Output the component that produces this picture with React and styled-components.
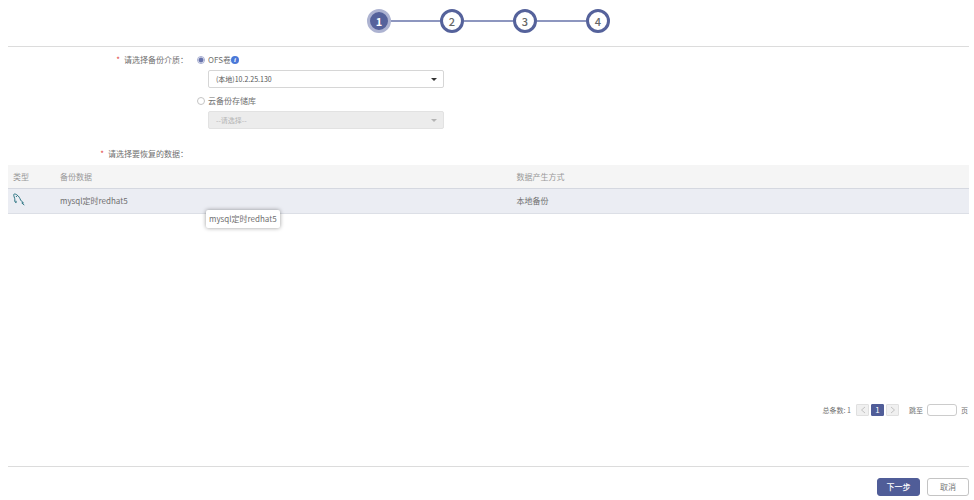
import React, { useState } from 'react';
import styled, { createGlobalStyle } from 'styled-components';

const GlobalStyle = createGlobalStyle`
  * {
    box-sizing: border-box;
  }
  body {
    margin: 0;
    background: #fff;
    color: #707070;
    font-family: "Noto Sans CJK SC", "Noto Sans", sans-serif;
    font-size: 8px;
    line-height: 12px;
  }
  button, input, select {
    font: inherit;
    color: inherit;
    margin: 0;
  }
`;

const Page = styled.div`
  display: flex;
  flex-direction: column;
  min-height: 100vh;
  padding: 0 5px 0 8px;
`;

const Steps = styled.ol`
  display: flex;
  align-items: center;
  justify-content: center;
  margin: 0;
  padding: 9px 0 13px;
  list-style: none;
  border-bottom: 1px solid #dcdcdc;
`;

const Step = styled.li`
  display: flex;
  align-items: center;

  & + &::before {
    content: '';
    width: 49px;
    height: 2px;
    background: #8d96bf;
  }
`;

const StepCircle = styled.span`
  display: flex;
  align-items: center;
  justify-content: center;
  width: 24px;
  height: 24px;
  border: 3px solid ${({ $active }) => ($active ? '#adb3d1' : '#55629b')};
  border-radius: 50%;
  background: ${({ $active }) => ($active ? '#55629b' : '#fff')};
  color: ${({ $active }) => ($active ? '#fff' : '#666')};
  font-size: 11px;
  font-weight: ${({ $active }) => ($active ? 700 : 500)};
`;

const Form = styled.form`
  display: flex;
  flex-direction: column;
  flex: 1;
`;

const Field = styled.div`
  display: flex;
  gap: 9px;
  padding-top: 6px;
`;

const FieldLabel = styled.span`
  width: 180px;
  line-height: 13px;
  text-align: right;
`;

const Required = styled.span`
  margin-right: 4px;
  color: #e0413c;
`;

const Options = styled.div`
  display: flex;
  flex-direction: column;
`;

const Option = styled.label`
  display: flex;
  align-items: center;
  height: 13px;
`;

const Radio = styled.input`
  appearance: none;
  flex: none;
  width: 8px;
  height: 8px;
  margin-right: 3px;
  border: 1px solid #c4c4c4;
  border-radius: 50%;
  background: #fff;

  &:checked {
    border-color: #a3abd0;
    background: radial-gradient(circle, #6672ab 2px, #fff 3px);
  }
`;

const InfoBadge = styled.span`
  display: flex;
  align-items: center;
  justify-content: center;
  width: 8px;
  height: 8px;
  border-radius: 50%;
  background: #4a78d8;
  color: #fff;
  font-family: "Liberation Serif", serif;
  font-size: 7px;
  font-style: italic;
  font-weight: 700;
  line-height: 8px;
`;

const SelectBox = styled.div`
  position: relative;
  width: 236px;
  margin: 4px 0 6px 11px;
  color: ${({ $disabled }) => ($disabled ? '#b4b4b4' : '#333')};

  &::after {
    content: '';
    position: absolute;
    top: 8px;
    right: 7px;
    border: 3px solid transparent;
    border-top-color: currentColor;
    border-bottom: 0;
    pointer-events: none;
  }
`;

const Select = styled.select`
  appearance: none;
  display: block;
  width: 100%;
  height: 18px;
  padding: 0 16px 0 7px;
  border: 1px solid #d6d6d6;
  border-radius: 2px;
  background: #fff;
  color: #555;
  font-size: 7px;

  &:disabled {
    border-color: #e2e2e2;
    background: #ececec;
    color: #b4b4b4;
    opacity: 1;
  }
`;

const DataHeading = styled(Field)`
  padding: 12px 0 5px;
`;

const TableArea = styled.div`
  position: relative;
`;

const Table = styled.table`
  width: 100%;
  table-layout: fixed;
  border-collapse: separate;
  border-spacing: 0;
  text-align: left;
`;

const HeadCell = styled.th`
  width: ${({ $width }) => $width || 'auto'};
  height: 24px;
  padding: 0 5px;
  border-bottom: 1px solid #d5d8e0;
  background: #f5f5f5;
  color: #999;
  font-weight: 400;
`;

const Cell = styled.td`
  height: 25px;
  padding: 0 5px;
  border-bottom: 1px solid #dcdfe6;
  background: #ebedf3;
`;

const DolphinIcon = styled.svg`
  display: block;
  width: 12px;
  height: 13px;
  margin-bottom: 3px;
`;

const Tooltip = styled.div`
  position: absolute;
  top: 45px;
  left: 198px;
  padding: 3px;
  border-radius: 2px;
  background: #fff;
  box-shadow: 0 0 4px rgba(0, 0, 0, 0.4);
`;

const Pagination = styled.nav`
  display: flex;
  align-items: center;
  justify-content: flex-end;
  margin-top: auto;
  padding: 0 1px 50px;
  font-size: 7px;
`;

const Total = styled.span`
  margin-right: 5px;
`;

const Pages = styled.div`
  display: flex;
  gap: 2px;
  margin-right: 10px;
`;

const PageButton = styled.button`
  display: flex;
  align-items: center;
  justify-content: center;
  width: 13px;
  height: 12px;
  padding: 0;
  border: 1px solid ${({ $current }) => ($current ? '#505d98' : '#e0e0e0')};
  border-radius: 1px;
  background: ${({ $current }) => ($current ? '#505d98' : '#f0f0f0')};
  color: ${({ $current }) => ($current ? '#fff' : '#c3c3c3')};
  font-size: 8px;
`;

const Chevron = styled.svg`
  width: 6px;
  height: 8px;
  fill: none;
  stroke: currentColor;
`;

const Jump = styled.label`
  display: flex;
  align-items: center;
  gap: 4px;
`;

const JumpInput = styled.input`
  width: 30px;
  height: 12px;
  padding: 0 3px;
  border: 1px solid #ccc;
  border-radius: 3px;
  background: #fff;
`;

const Footer = styled.footer`
  display: flex;
  justify-content: flex-end;
  gap: 7px;
  padding: 11px 0 4px;
  border-top: 1px solid #dcdcdc;
`;

const Button = styled.button`
  width: ${({ $primary }) => ($primary ? '43px' : '42px')};
  height: 18px;
  padding: 0;
  border: 1px solid ${({ $primary }) => ($primary ? '#505d98' : '#c4c4c4')};
  border-radius: 3px;
  background: ${({ $primary }) => ($primary ? '#505d98' : '#fff')};
  color: ${({ $primary }) => ($primary ? '#fff' : '#777')};
  font-weight: ${({ $primary }) => ($primary ? 500 : 400)};
`;

const steps = [1, 2, 3, 4];
const rows = [{ name: 'mysql定时redhat5', source: '本地备份' }];

function StepBar({ current }) {
  return (
    <Steps>
      {steps.map((step) => (
        <Step key={step}>
          <StepCircle $active={step === current}>{step}</StepCircle>
        </Step>
      ))}
    </Steps>
  );
}

function MysqlIcon() {
  return (
    <DolphinIcon viewBox="0 0 12 13" fill="none" stroke="#2b7482" role="img" aria-label="MySQL">
      <path d="M3.2 9.6C2.2 10 1.6 8.4 1.8 6.8C2 5 .3 2.8 .8 1.4C1.6 .6 3 1.2 4 2C6 3.2 6.8 5.2 7.6 7C8.2 8.4 9.4 8.8 10.4 9.8" />
      <path d="M3.2 9.6L3 7.8M10.4 9.8L8.8 10C9.4 11 10.5 10.9 11.3 12" />
      <path d="M3 3L3.8 4" />
    </DolphinIcon>
  );
}

function BackupTable() {
  return (
    <TableArea>
      <Table>
        <thead>
          <tr>
            <HeadCell $width="47px">类型</HeadCell>
            <HeadCell $width="47.5%">备份数据</HeadCell>
            <HeadCell>数据产生方式</HeadCell>
          </tr>
        </thead>
        <tbody>
          {rows.map((row) => (
            <tr key={row.name}>
              <Cell><MysqlIcon /></Cell>
              <Cell>{row.name}</Cell>
              <Cell>{row.source}</Cell>
            </tr>
          ))}
        </tbody>
      </Table>
      <Tooltip role="tooltip">{rows[0].name}</Tooltip>
    </TableArea>
  );
}

function Pager() {
  return (
    <Pagination>
      <Total>总条数: 1</Total>
      <Pages>
        <PageButton type="button" aria-label="上一页">
          <Chevron viewBox="0 0 6 8"><path d="M5 1L1.5 4L5 7" /></Chevron>
        </PageButton>
        <PageButton type="button" $current>1</PageButton>
        <PageButton type="button" aria-label="下一页">
          <Chevron viewBox="0 0 6 8"><path d="M1 1L4.5 4L1 7" /></Chevron>
        </PageButton>
      </Pages>
      <Jump>
        跳至
        <JumpInput type="text" />
        页
      </Jump>
    </Pagination>
  );
}

function App() {
  const [medium, setMedium] = useState('ofs');

  return (
    <Page>
      <GlobalStyle />
      <StepBar current={1} />
      <Form onSubmit={(e) => e.preventDefault()}>
        <Field role="radiogroup" aria-labelledby="medium-label">
          <FieldLabel id="medium-label"><Required>*</Required>请选择备份介质：</FieldLabel>
          <Options>
            <Option>
              <Radio
                type="radio"
                name="medium"
                checked={medium === 'ofs'}
                onChange={() => setMedium('ofs')}
              />
              OFS卷
              <InfoBadge>i</InfoBadge>
            </Option>
            <SelectBox $disabled={medium !== 'ofs'}>
              <Select aria-label="OFS卷" disabled={medium !== 'ofs'}>
                <option>(本地)10.2.25.130</option>
              </Select>
            </SelectBox>
            <Option>
              <Radio
                type="radio"
                name="medium"
                checked={medium === 'cloud'}
                onChange={() => setMedium('cloud')}
              />
              云备份存储库
            </Option>
            <SelectBox $disabled={medium !== 'cloud'}>
              <Select aria-label="云备份存储库" disabled={medium !== 'cloud'}>
                <option>--请选择--</option>
              </Select>
            </SelectBox>
          </Options>
        </Field>
        <DataHeading>
          <FieldLabel><Required>*</Required>请选择要恢复的数据：</FieldLabel>
        </DataHeading>
        <BackupTable />
        <Pager />
        <Footer>
          <Button type="submit" $primary>下一步</Button>
          <Button type="button">取消</Button>
        </Footer>
      </Form>
    </Page>
  );
}

export default App;
